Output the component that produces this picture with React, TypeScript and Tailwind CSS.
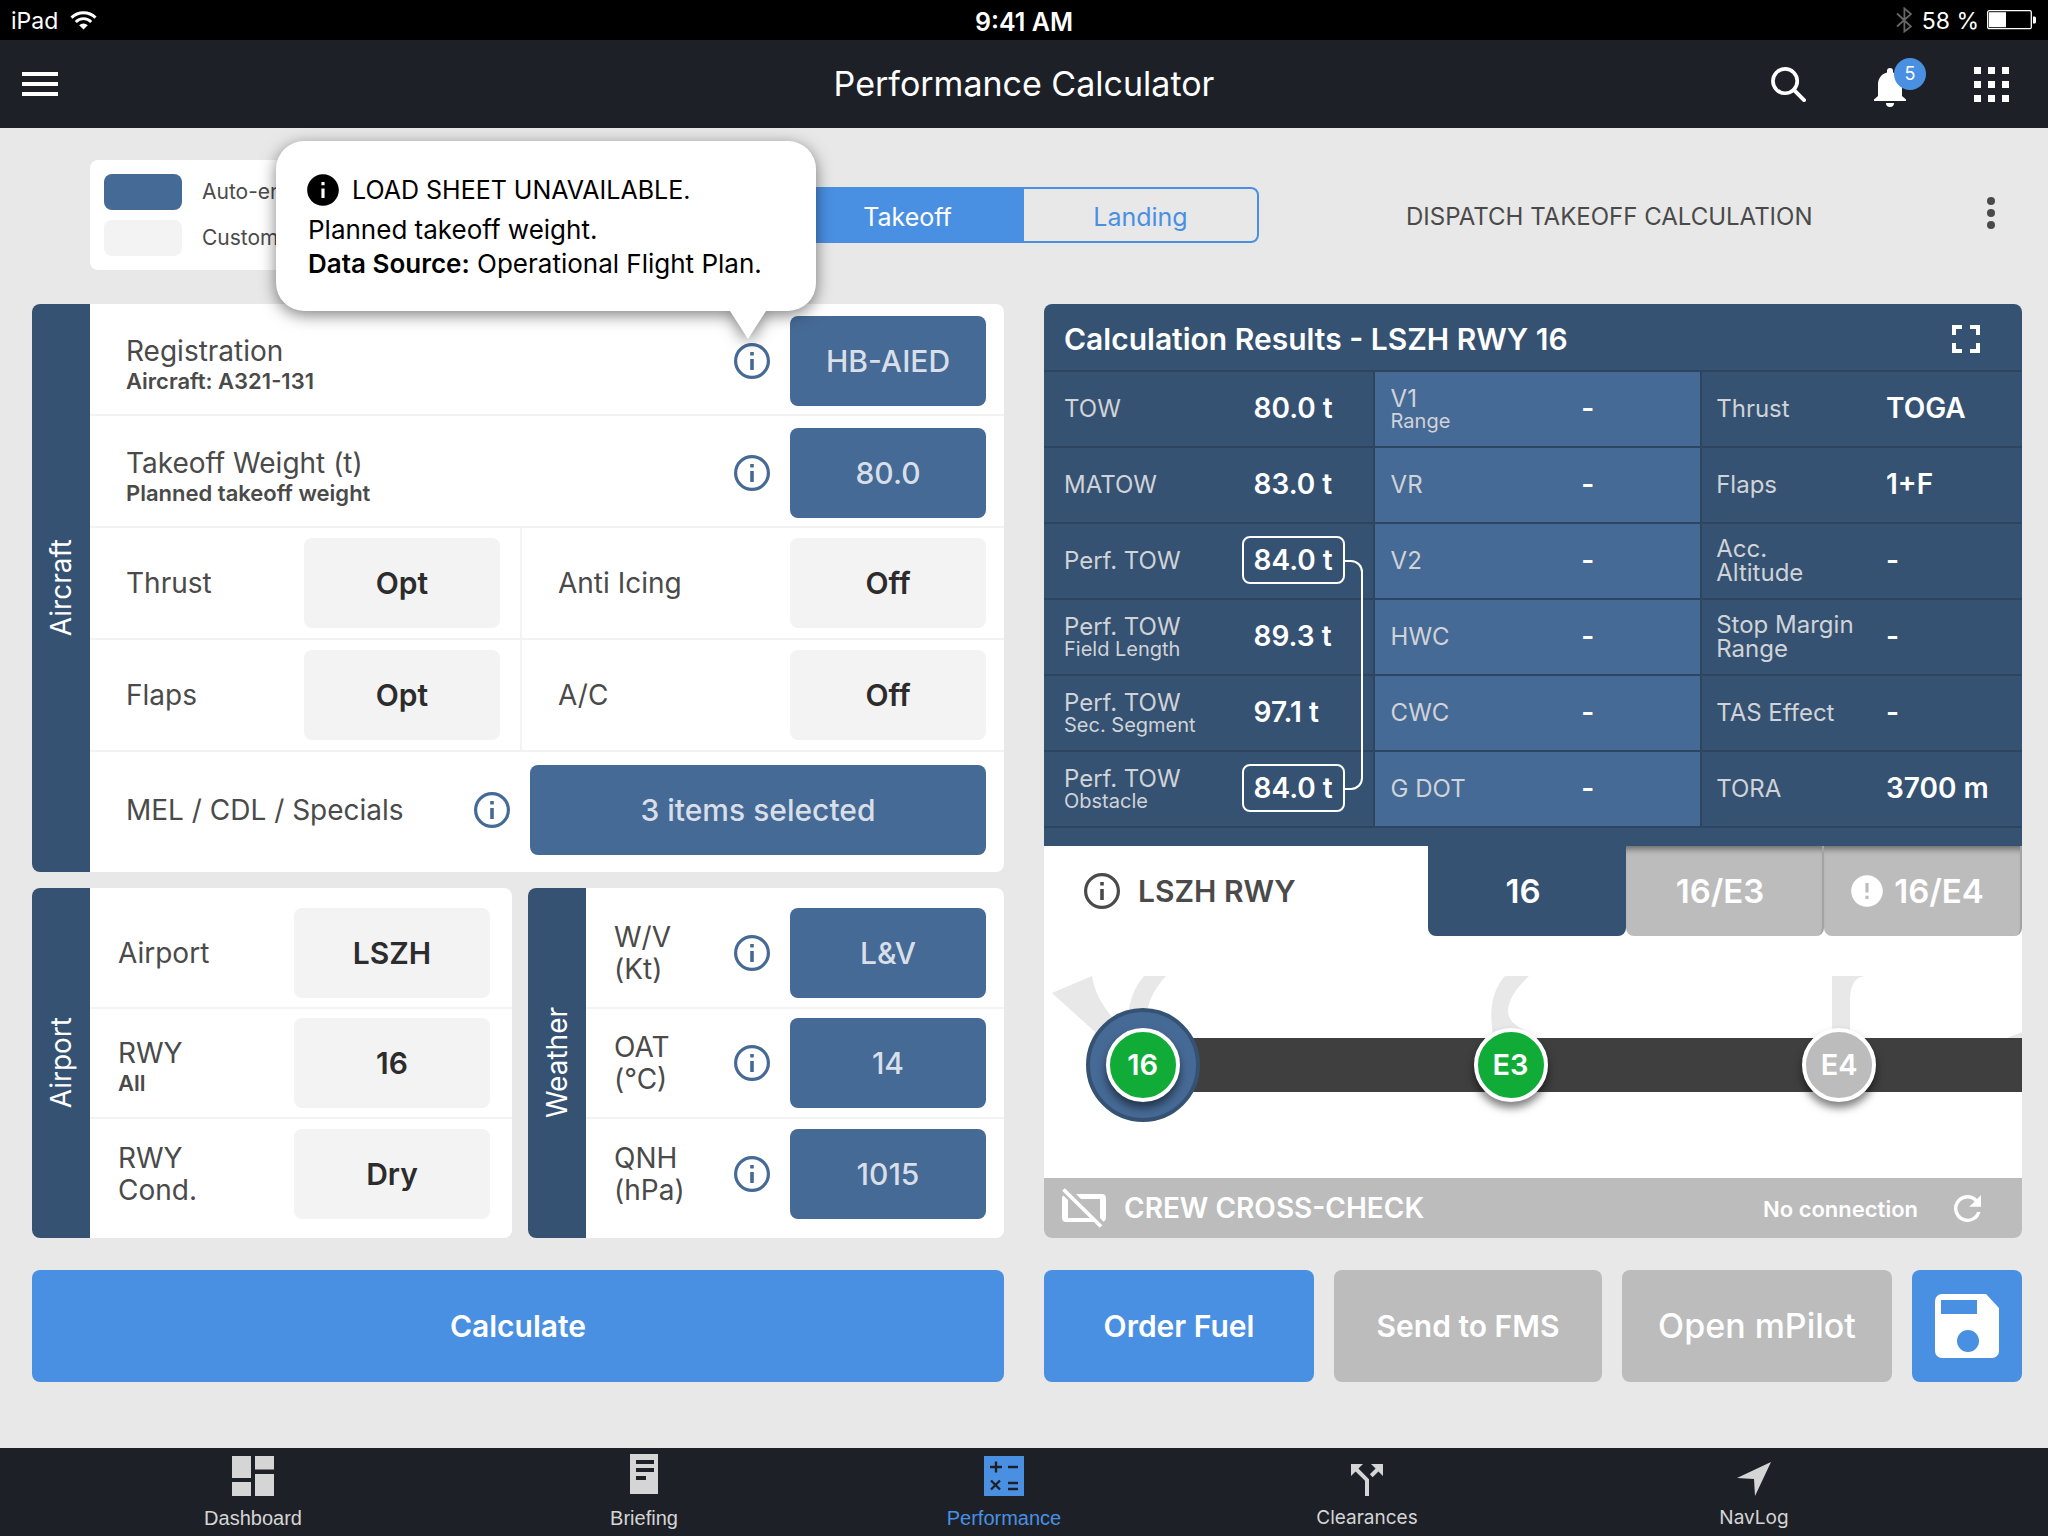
import { useState } from "react";
import type { ReactNode } from "react";
import clsx from "clsx";
import { MdInfo, MdError } from "react-icons/md";

type IconProps = { className?: string };

function InfoIcon({ className }: IconProps) {
  return (
    <svg viewBox="0 0 36 36" className={clsx("size-9 shrink-0", className)} fill="none" aria-hidden="true">
      <circle cx="18" cy="18" r="16.4" stroke="currentColor" strokeWidth="3.2" />
      <path d="M16.2 9h3.6v3.4h-3.6zM16.2 16h3.6v11h-3.6z" fill="currentColor" />
    </svg>
  );
}

function WifiIcon() {
  return (
    <svg viewBox="0 0 27 19" className="h-[19px] w-[27px]" fill="none" aria-hidden="true">
      <path d="M1.5 6.6a17 17 0 0 1 24 0" stroke="#fff" strokeWidth="3" />
      <path d="M5.8 10.9a10.9 10.9 0 0 1 15.4 0" stroke="#fff" strokeWidth="2.8" />
      <path d="M9.2 14.2a6.1 6.1 0 0 1 8.6 0L13.5 18.6z" fill="#fff" />
    </svg>
  );
}

function BluetoothIcon() {
  return (
    <svg viewBox="0 0 16 26" className="h-[26px] w-4" fill="none" aria-hidden="true">
      <path d="M1 6.5l14 13-6.6 5V1.5L15 7 1 19.5" stroke="#666" strokeWidth="1.8" />
    </svg>
  );
}

function BatteryIcon() {
  return (
    <svg viewBox="0 0 50 20" className="h-5 w-[50px]" fill="none" aria-hidden="true">
      <rect x="0.7" y="0.7" width="43.6" height="18" rx="1.5" stroke="#fff" strokeWidth="1.3" />
      <rect x="2" y="2.2" width="17" height="15" fill="#fff" />
      <path d="M46 6.5h1.5a1.5 1.5 0 0 1 1.5 1.5v4a1.5 1.5 0 0 1-1.5 1.5H46z" fill="#fff" />
    </svg>
  );
}

function StatusBar() {
  return (
    <div className="grid h-10 grid-cols-3 items-center bg-black px-[11px] text-white">
      <div className="flex items-center gap-3">
        <span className="pt-0.5 text-[23px] leading-7">iPad</span>
        <WifiIcon />
      </div>
      <span className="pt-1 text-center text-[25px] leading-7 font-semibold">9:41 AM</span>
      <div className="flex items-center justify-end">
        <BluetoothIcon />
        <span className="mr-2 ml-2.5 pt-0.5 text-[23px] leading-7">58 %</span>
        <BatteryIcon />
      </div>
    </div>
  );
}

function Header() {
  return (
    <header className="grid h-[88px] grid-cols-[1fr_auto_1fr] items-center bg-[#1e2028] px-[22px] text-white">
      <button type="button" aria-label="Menu" className="w-9">
        <svg viewBox="0 0 36 24" className="h-6 w-9" fill="currentColor" aria-hidden="true">
          <path d="M0 0h36v4H0zM0 10h36v4H0zM0 20h36v4H0z" />
        </svg>
      </button>
      <h1 className="text-[34px] leading-10 font-normal">Performance Calculator</h1>
      <div className="flex items-center justify-end pr-[17px]">
        <button type="button" aria-label="Search">
          <svg viewBox="0 0 36 36" className="size-[35px]" fill="none" stroke="currentColor" aria-hidden="true">
            <circle cx="14.5" cy="14.5" r="12.5" strokeWidth="3.8" />
            <path d="M23.5 23.500L34 34" strokeWidth="4" strokeLinecap="round" />
          </svg>
        </button>
        <button type="button" aria-label="Notifications, 5 new" className="relative mt-2 mr-[68px] ml-[68px]">
          <svg viewBox="0 0 32 40" className="h-10 w-8" fill="currentColor" aria-hidden="true">
            <path d="M16 0a3 3 0 0 1 3 3v1.500c5.500 1.300 9 6 9 12V28l4 3.500V33H0v-1.500L4 28V16.500c0-6 3.500-10.700 9-12V3a3 3 0 0 1 3-3zM12 35h8a4 4 0 0 1-8 0z" />
          </svg>
          <span className="absolute -top-2.5 left-5 flex size-8 items-center justify-center rounded-full bg-[#4a90e2] text-[18px] leading-6">
            5
          </span>
        </button>
        <button type="button" aria-label="Apps">
          <svg viewBox="0 0 35 35" className="size-[35px]" fill="currentColor" aria-hidden="true">
            <path d="M0 0h7v7H0zM14 0h7v7h-7zM28 0h7v7h-7zM0 14h7v7H0zM14 14h7v7h-7zM28 14h7v7h-7zM0 28h7v7H0zM14 28h7v7h-7zM28 28h7v7h-7z" />
          </svg>
        </button>
      </div>
    </header>
  );
}

function Toolbar() {
  const [mode, setMode] = useState("Takeoff");

  return (
    <div className="grid grid-cols-[699fr_470fr_763fr] items-center pt-8 pr-[26px] pb-[34px] pl-[90px]">
      <div className="flex h-[110px] w-[300px] flex-col justify-center gap-2.5 rounded-lg bg-white pl-3.5 text-[21px] leading-7 text-[#4a4a4a]">
        <div className="flex items-center gap-5">
          <span className="h-9 w-[78px] rounded-lg bg-[#466a96]" />
          Auto-entered
        </div>
        <div className="flex items-center gap-5">
          <span className="h-9 w-[78px] rounded-lg bg-[#f3f3f3]" />
          Custom
        </div>
      </div>
      <div className="grid h-14 grid-cols-2 overflow-hidden rounded-lg border-2 border-[#4a90e2] text-[25px] leading-8">
        {["Takeoff", "Landing"].map((name) => (
          <button
            key={name}
            type="button"
            aria-pressed={mode === name}
            onClick={() => setMode(name)}
            className={clsx("pt-1", mode === name ? "bg-[#4a90e2] text-white" : "text-[#4a90e2]")}
          >
            {name}
          </button>
        ))}
      </div>
      <div className="flex items-center justify-between pr-[27px] pl-[147px]">
        <p className="pt-1 text-[24px] leading-8 text-[#4a4a4a]">DISPATCH TAKEOFF CALCULATION</p>
        <button type="button" aria-label="More" className="mb-1 text-[#4a4a4a]">
          <svg viewBox="0 0 8 32" className="h-8 w-2" fill="currentColor" aria-hidden="true">
            <circle cx="4" cy="4" r="4" />
            <circle cx="4" cy="16" r="4" />
            <circle cx="4" cy="28" r="4" />
          </svg>
        </button>
      </div>
    </div>
  );
}

function SourcePopover() {
  return (
    <div
      role="tooltip"
      className="absolute -right-[46px] bottom-full z-10 mb-8 h-[170px] w-[540px] rounded-[28px] bg-white pt-[30px] pl-8 text-left text-[26px] leading-[34px] text-black drop-shadow-[0_4px_8px_rgba(0,0,0,0.5)]"
    >
      <p className="mb-1 flex items-center gap-2.5 text-[25px]">
        <MdInfo className="-ml-1 size-[38px]" />
        LOAD SHEET UNAVAILABLE.
      </p>
      <p>Planned takeoff weight.</p>
      <p>
        <b className="font-semibold">Data Source:</b> Operational Flight Plan.
      </p>
      <svg viewBox="0 0 36 28" className="absolute top-full right-[50px] h-7 w-9" aria-hidden="true">
        <path d="M0 0h36L18 28z" fill="#fff" />
      </svg>
    </div>
  );
}

function InfoButton({ about, children }: { about: string; children?: ReactNode }) {
  return (
    <div className="relative mr-5 flex">
      <button type="button" aria-label={`About ${about}`} className="text-[#466a96]">
        <InfoIcon />
      </button>
      {children}
    </div>
  );
}

function ValueButton({ id, value, auto, wide }: { id: string; value: string; auto?: boolean; wide?: boolean }) {
  return (
    <button
      id={id}
      type="button"
      className={clsx(
        "h-[90px] shrink-0 rounded-lg text-[30px] leading-9",
        wide ? "w-[456px]" : "w-[196px]",
        auto ? "bg-[#466a96] font-medium text-[#d8dfe8]" : "bg-[#f3f3f3] font-semibold text-[#2c2c2c]"
      )}
    >
      {value}
    </button>
  );
}

function FieldLabel({ htmlFor, text, sub }: { htmlFor: string; text: string; sub?: string }) {
  return (
    <label
      htmlFor={htmlFor}
      className={clsx("mr-auto block text-[28px] leading-8 whitespace-pre-line text-[#4a4a4a]", sub && "pt-2")}
    >
      {text}
      {sub ? <span className="block text-[22px] leading-7 font-semibold">{sub}</span> : null}
    </label>
  );
}

function Panel({ title, children }: { title: string; children: ReactNode }) {
  return (
    <section className="flex rounded-lg bg-white">
      <h2 className="flex w-[58px] shrink-0 items-center justify-center rounded-l-lg bg-[#355272] text-[28px] leading-8 text-white">
        <span className="rotate-180 [writing-mode:vertical-rl]">{title}</span>
      </h2>
      <div className="min-w-0 flex-1">{children}</div>
    </section>
  );
}

function AircraftPanel() {
  const row = "flex h-28 items-center border-b-2 border-[#f3f3f3] pl-9";

  return (
    <Panel title="Aircraft">
      <div className={clsx(row, "pt-1 pr-[18px]")}>
        <FieldLabel htmlFor="registration" text="Registration" sub="Aircraft: A321-131" />
        <InfoButton about="registration">
          <SourcePopover />
        </InfoButton>
        <ValueButton id="registration" value="HB-AIED" auto />
      </div>
      <div className={clsx(row, "pt-1 pr-[18px]")}>
        <FieldLabel htmlFor="weight" text="Takeoff Weight (t)" sub="Planned takeoff weight" />
        <InfoButton about="takeoff weight" />
        <ValueButton id="weight" value="80.0" auto />
      </div>
      <div className="grid grid-cols-[432fr_482fr]">
        <div className={clsx(row, "border-r-2 pr-5")}>
          <FieldLabel htmlFor="thrust" text="Thrust" />
          <ValueButton id="thrust" value="Opt" />
        </div>
        <div className={clsx(row, "pr-[18px]")}>
          <FieldLabel htmlFor="anti-icing" text="Anti Icing" />
          <ValueButton id="anti-icing" value="Off" />
        </div>
        <div className={clsx(row, "border-r-2 pr-5")}>
          <FieldLabel htmlFor="flaps" text="Flaps" />
          <ValueButton id="flaps" value="Opt" />
        </div>
        <div className={clsx(row, "pr-[18px]")}>
          <FieldLabel htmlFor="ac" text="A/C" />
          <ValueButton id="ac" value="Off" />
        </div>
      </div>
      <div className="flex h-[120px] items-center pr-[18px] pb-1 pl-9">
        <FieldLabel htmlFor="specials" text="MEL / CDL / Specials" />
        <InfoButton about="MEL, CDL and specials" />
        <ValueButton id="specials" value="3 items selected" auto wide />
      </div>
    </Panel>
  );
}

function AirportPanel() {
  return (
    <Panel title="Airport">
      <div className="divide-y-2 divide-[#f3f3f3] pt-[11px] pb-[9px]">
        <div className="flex h-[110px] items-center pr-[22px] pl-7">
          <FieldLabel htmlFor="airport" text="Airport" />
          <ValueButton id="airport" value="LSZH" />
        </div>
        <div className="flex h-[110px] items-center pr-[22px] pl-7">
          <FieldLabel htmlFor="runway" text="RWY" sub="All" />
          <ValueButton id="runway" value="16" />
        </div>
        <div className="flex h-[110px] items-center pr-[22px] pl-7">
          <FieldLabel htmlFor="condition" text={"RWY\nCond."} />
          <ValueButton id="condition" value="Dry" />
        </div>
      </div>
    </Panel>
  );
}

const weather = [
  { id: "wind", label: "W/V\n(Kt)", value: "L&V" },
  { id: "oat", label: "OAT\n(°C)", value: "14" },
  { id: "qnh", label: "QNH\n(hPa)", value: "1015" },
];

function WeatherPanel() {
  return (
    <Panel title="Weather">
      <div className="divide-y-2 divide-[#f3f3f3] pt-[11px] pb-[9px]">
        {weather.map((item) => (
          <div key={item.id} className="flex h-[110px] items-center pr-[18px] pl-7">
            <FieldLabel htmlFor={item.id} text={item.label} />
            <InfoButton about={item.id} />
            <ValueButton id={item.id} value={item.value} auto />
          </div>
        ))}
      </div>
    </Panel>
  );
}

type Result = { label: string; sub?: string; value: string; boxed?: "start" | "end" };

const results: Result[][] = [
  [
    { label: "TOW", value: "80.0 t" },
    { label: "V1", sub: "Range", value: "-" },
    { label: "Thrust", value: "TOGA" },
  ],
  [
    { label: "MATOW", value: "83.0 t" },
    { label: "VR", value: "-" },
    { label: "Flaps", value: "1+F" },
  ],
  [
    { label: "Perf. TOW", value: "84.0 t", boxed: "start" },
    { label: "V2", value: "-" },
    { label: "Acc.\nAltitude", value: "-" },
  ],
  [
    { label: "Perf. TOW", sub: "Field Length", value: "89.3 t" },
    { label: "HWC", value: "-" },
    { label: "Stop Margin\nRange", value: "-" },
  ],
  [
    { label: "Perf. TOW", sub: "Sec. Segment", value: "97.1 t" },
    { label: "CWC", value: "-" },
    { label: "TAS Effect", value: "-" },
  ],
  [
    { label: "Perf. TOW", sub: "Obstacle", value: "84.0 t", boxed: "end" },
    { label: "G DOT", value: "-" },
    { label: "TORA", value: "3700 m" },
  ],
];

function ResultCells({ result, column }: { result: Result; column: number }) {
  return (
    <>
      <th
        scope="row"
        className={clsx(
          "h-[76px] border-b-2 border-[#2e4561] text-left text-[24px] leading-6 font-normal whitespace-pre-line text-[#d0d3d8]",
          column === 0 && "pl-5",
          column === 1 && "border-l-2 bg-[#466a96] pl-4",
          column === 2 && "border-l-2 pl-3.5"
        )}
      >
        {result.label}
        {result.sub ? <span className="block text-[20px] leading-5">{result.sub}</span> : null}
      </th>
      <td
        className={clsx(
          "border-b-2 border-[#2e4561] pb-0.5 text-[28px] leading-9 font-semibold whitespace-nowrap text-white",
          column === 1 && "bg-[#466a96] pl-3"
        )}
      >
        {column === 0 ? (
          <span
            className={clsx(
              "relative inline-block rounded-lg border-2 px-2.5 py-1",
              result.boxed ? "border-white" : "border-transparent"
            )}
          >
            {result.value}
            {/* Joins the limiting value to the case it comes from */}
            {result.boxed === "start" ? (
              <span className="absolute top-[22px] left-full h-[230px] w-5 rounded-r-xl border-2 border-l-0 border-white" />
            ) : null}
          </span>
        ) : (
          result.value
        )}
      </td>
    </>
  );
}

function ResultsPanel() {
  return (
    <div className="rounded-t-lg bg-[#355272] pb-[18px]">
      <div className="flex h-[68px] items-center justify-between border-b-2 border-[#2e4561] pt-1 pr-[42px] pl-5 text-white">
        <h2 className="text-[30px] leading-9 font-semibold">Calculation Results - LSZH RWY 16</h2>
        <button type="button" aria-label="Full screen">
          <svg viewBox="0 0 28 28" className="size-7" fill="none" stroke="currentColor" strokeWidth="4" aria-hidden="true">
            <path d="M2 10V2h8M18 2h8v8M26 18v8h-8M10 26H2v-8" />
          </svg>
        </button>
      </div>
      <table className="w-full table-fixed border-separate border-spacing-0">
        <colgroup>
          <col className="w-[20.2%]" />
          <col className="w-[13.4%]" />
          <col className="w-[20.1%]" />
          <col className="w-[13.4%]" />
          <col className="w-[19%]" />
          <col />
        </colgroup>
        <tbody>
          {results.map((row, i) => (
            <tr key={i}>
              {row.map((result, column) => (
                <ResultCells key={result.label} result={result} column={column} />
              ))}
            </tr>
          ))}
        </tbody>
      </table>
    </div>
  );
}

function RunwayTabs() {
  const tab = "flex items-center justify-center gap-3 rounded-b-lg pr-2 text-[33px] leading-10 font-semibold text-white";
  const idle = "border-r-2 border-[#a3a3a3] bg-[#bcbcbc] shadow-[inset_0_8px_6px_-5px_rgba(0,0,0,0.45)]";

  return (
    <div className="grid h-[90px] grid-cols-[384fr_198fr_198fr_198fr]">
      <div className="flex items-center gap-[18px] pl-10 text-[30px] leading-9 font-semibold text-[#4a4a4a]">
        <InfoIcon />
        LSZH RWY
      </div>
      <button type="button" className={clsx(tab, "bg-[#355272]")}>
        16
      </button>
      <button type="button" className={clsx(tab, idle)}>
        16/E3
      </button>
      <button type="button" className={clsx(tab, idle)}>
        <MdError className="-mr-1 -ml-1 size-[38px]" />
        16/E4
      </button>
    </div>
  );
}

function RunwayMap() {
  const pin =
    "absolute top-[92px] flex size-[74px] -translate-x-1/2 items-center justify-center rounded-full border-4 border-white text-[29px] leading-9 font-semibold text-white shadow-[0_6px_8px_rgba(0,0,0,0.5)]";

  return (
    <div className="relative h-[242px]">
      <svg viewBox="0 0 978 242" preserveAspectRatio="none" className="h-full w-full" aria-hidden="true">
        <g fill="#e8e8e8">
          <path d="M8 57L48 40C51 57 57 68 72 86L60 104z" />
          <path d="M100 40h22C110 53 104 65 102 82H84C85 65 90 52 100 40z" />
          <path d="M461 40h24C470 54 464 65 464 76C465 84 470 89 480 94V104H450C445 79 446 57 461 40z" />
          <path d="M788 40h33C811 41 806 49 806 64v36h-18z" />
          <path d="M963 102l15-6v6z" />
        </g>
        <path d="M99 102h879v54H99z" fill="#3f3f3f" />
      </svg>
      <span className="absolute top-[72px] left-[10.1%] size-[114px] -translate-x-1/2 rounded-full border-4 border-[#355272] bg-[#466a96]" />
      <button type="button" className={clsx(pin, "left-[10.1%] bg-[#11ac38]")}>
        16
      </button>
      <button type="button" className={clsx(pin, "left-[47.7%] bg-[#11ac38]")}>
        E3
      </button>
      <button type="button" className={clsx(pin, "left-[81.3%] bg-[#bcbcbc]")}>
        E4
      </button>
    </div>
  );
}

function CrossCheckBar() {
  return (
    <div className="flex h-[60px] items-center rounded-b-lg bg-[#bcbcbc] pr-[41px] pl-[18px] text-white">
      <svg viewBox="0 0 44 40" className="h-10 w-11" fill="none" aria-hidden="true">
        <path
          fillRule="evenodd"
          d="M14 6h26a4 4 0 0 1 4 4v20a4 4 0 0 1-2.500 3.700L38 30V11H19zM1.500 7.500L6 12v18h24l4.500 4H4a4 4 0 0 1-4-4V10c0-1 .600-2 1.500-2.500z"
          fill="currentColor"
        />
        <path d="M1.500 1.500l37.500 37" stroke="currentColor" strokeWidth="3.800" />
      </svg>
      <h2 className="ml-[18px] text-[28px] leading-9 font-semibold">CREW CROSS-CHECK</h2>
      <span className="mr-9 ml-auto pt-0.5 text-[22px] leading-7 font-semibold">No connection</span>
      <button type="button" aria-label="Retry">
        <svg viewBox="4 4 16 16" className="size-[27px]" fill="currentColor" aria-hidden="true">
          <path d="M17.650 6.350A7.958 7.958 0 0 0 12 4a8 8 0 1 0 7.730 10h-2.080A6 6 0 1 1 12 6c1.660 0 3.140.690 4.220 1.780L13 11h7V4z" />
        </svg>
      </button>
    </div>
  );
}

function Actions() {
  const button = "h-28 rounded-lg font-semibold text-white";

  return (
    <div className="grid grid-cols-[270fr_268fr_270fr_110fr] gap-5 text-[30px] leading-9">
      <button type="button" className={clsx(button, "bg-[#4a90e2]")}>
        Order Fuel
      </button>
      <button type="button" className={clsx(button, "bg-[#bcbcbc]")}>
        Send to FMS
      </button>
      <button type="button" className="h-28 rounded-lg bg-[#bcbcbc] text-[34px] leading-10 font-medium text-white">
        Open mPilot
      </button>
      <button type="button" aria-label="Save" className={clsx(button, "flex items-center justify-center bg-[#4a90e2]")}>
        <svg viewBox="0 0 64 64" className="size-16" aria-hidden="true">
          <path d="M7 0h44l13 14v43a7 7 0 0 1-7 7H7a7 7 0 0 1-7-7V7a7 7 0 0 1 7-7z" fill="#fff" />
          <path d="M6 6h36v14H6z" fill="#4a90e2" />
          <circle cx="33" cy="47" r="11" fill="#4a90e2" />
        </svg>
      </button>
    </div>
  );
}

const navItems = [
  {
    name: "Dashboard",
    icon: (
      <svg viewBox="0 0 42 40" className="h-10 w-[42px]" fill="currentColor">
        <path d="M0 0h19v22H0zM0 26h19v14H0zM23 0h19v13.500H23zM23 18h19v22H23z" />
      </svg>
    ),
  },
  {
    name: "Briefing",
    icon: (
      <svg viewBox="0 0 28 40" className="mb-0.5 h-10 w-7" fill="currentColor">
        <path fillRule="evenodd" d="M0 0h28v40H0zM6 6v4h18V6zM6 14v4h18v-4zM6 22v4h10v-4z" />
      </svg>
    ),
  },
  {
    name: "Performance",
    icon: (
      <svg viewBox="0 0 40 40" className="size-10" fill="none">
        <path d="M0 0h40v40H0z" fill="currentColor" />
        <path d="M6 11h12M12 5.500v11M24 11h10M24 27h10M24 33h10M7 24.500l9 9M16 24.500l-9 9" stroke="#1e2028" strokeWidth="2.400" />
      </svg>
    ),
  },
  {
    name: "Clearances",
    icon: (
      <svg viewBox="4 4 16 16" className="size-8" fill="currentColor">
        <path d="M14 4l2.290 2.290-2.880 2.880 1.420 1.420 2.880-2.880L20 10V4zM10 4H4v6l2.290-2.290 4.710 4.700V20h2v-8.410l-5.290-5.300z" />
      </svg>
    ),
  },
  {
    name: "NavLog",
    icon: (
      <svg viewBox="0 0 34 34" className="size-[34px]" fill="currentColor">
        <path d="M34 0L18 34l-1-17L0 16z" />
      </svg>
    ),
  },
];

function BottomNav() {
  return (
    <nav className="grid h-[88px] grid-cols-[390fr_392fr_328fr_398fr_376fr] bg-[#1e2028] pr-[106px] pl-[58px]">
      {navItems.map((item, i) => (
        <a
          key={item.name}
          href={`#${item.name.toLowerCase()}`}
          className={clsx(
            "flex flex-col items-center pt-2",
            item.name === "Performance" ? "text-[#4a90e2]" : "text-[#d5d5d5]",
            i < 3 && "font-['Liberation_Sans',Arial,sans-serif]"
          )}
        >
          <span className="flex h-10 items-end">{item.icon}</span>
          <span className={clsx("mt-2.5 leading-6", i < 3 ? "text-[20px]" : "text-[19px]")}>{item.name}</span>
        </a>
      ))}
    </nav>
  );
}

export default function App() {
  return (
    <div className="flex min-h-screen flex-col bg-[#e8e8e8] font-['Inter','Liberation_Sans',sans-serif]">
      <StatusBar />
      <Header />
      <main className="flex-1 pb-[66px]">
        <Toolbar />
        <div className="grid grid-cols-[972fr_978fr] gap-x-10 gap-y-8 pr-[26px] pl-8">
          <div className="flex flex-col gap-4">
            <AircraftPanel />
            <div className="grid grid-cols-[480fr_476fr] gap-4">
              <AirportPanel />
              <WeatherPanel />
            </div>
          </div>
          <div className="flex flex-col rounded-lg bg-white">
            <ResultsPanel />
            <RunwayTabs />
            <RunwayMap />
            <CrossCheckBar />
          </div>
          <button type="button" className="h-28 rounded-lg bg-[#4a90e2] text-[30px] leading-9 font-semibold text-white">
            Calculate
          </button>
          <Actions />
        </div>
      </main>
      <BottomNav />
    </div>
  );
}
